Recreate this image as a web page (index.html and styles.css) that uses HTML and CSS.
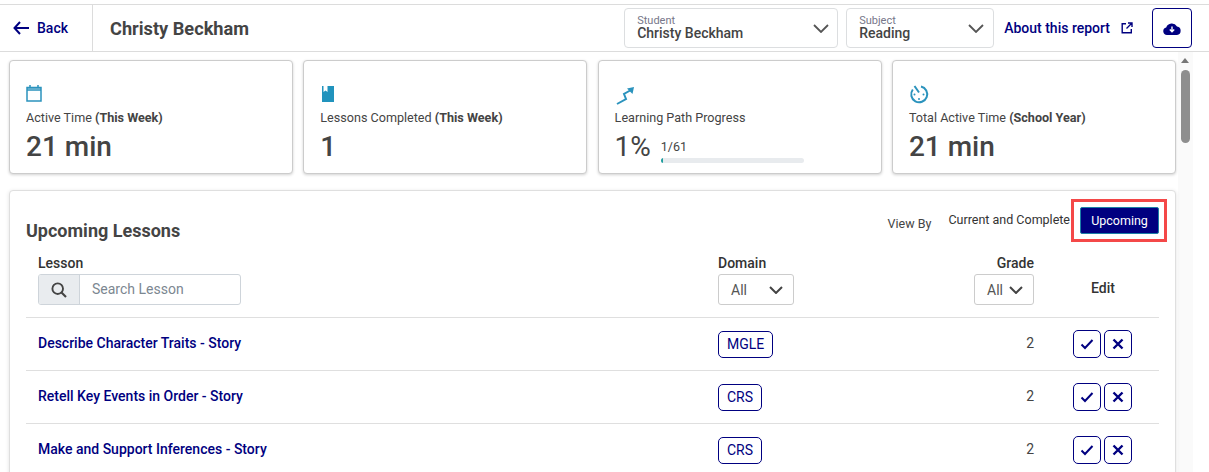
FILE: index.html
```html
<!DOCTYPE html>
<html lang="en">
<head>
<meta charset="utf-8">
<title>Christy Beckham</title>
<link rel="stylesheet" href="styles.css">
</head>
<body>
<header class="topbar">
  <a class="back">
    <svg class="back-icon" viewBox="0 0 16 14"><path d="M7 1 1.500 7 7 13M2 7h14" fill="none" stroke="#000080" stroke-width="2"/></svg>
    Back
  </a>
  <h1 class="student-name">Christy Beckham</h1>
  <div class="select select-student">
    <div class="select-text"><span class="select-label">Student</span><span class="select-value">Christy Beckham</span></div>
    <svg class="chev" viewBox="0 0 16 9"><path d="M1 1l7 7 7-7" fill="none" stroke="#555" stroke-width="1.800"/></svg>
  </div>
  <div class="select select-subject">
    <div class="select-text"><span class="select-label">Subject</span><span class="select-value">Reading</span></div>
    <svg class="chev" viewBox="0 0 16 9"><path d="M1 1l7 7 7-7" fill="none" stroke="#555" stroke-width="1.800"/></svg>
  </div>
  <a class="about">About this report
    <svg class="ext" viewBox="0 0 12 12"><path d="M5 1.700H1.200v9.100h9.100V7M7 1h4v4M11 1 5.500 6.500" fill="none" stroke="#000080" stroke-width="1.400"/></svg>
  </a>
  <button class="download"><svg viewBox="0 0 18 13" class="cloud"><path d="M4 13a3.800 3.800 0 0 1-.8-7.500A6 6 0 0 1 14 4.500 4.300 4.300 0 0 1 14 13z" fill="#000080"/><path d="M9 4.500v5M6.800 7.500 9 9.800l2.200-2.300" fill="none" stroke="#fff" stroke-width="1.400"/></svg></button>
</header>

<div class="content">
  <main class="main">
    <section class="cards">
      <article class="card">
        <svg class="card-icon" viewBox="0 0 16 18"><path d="M1 4h14v13H1zM1 3.500h14V6H1z" fill="none" stroke="#2b93bd" stroke-width="1.500"/><path d="M4 1v3M12 1v3" stroke="#2b93bd" stroke-width="1.500"/></svg>
        <p class="card-label">Active Time <b>(This Week)</b></p>
        <p class="card-value">21 min</p>
      </article>
      <article class="card">
        <svg class="card-icon" viewBox="0 0 16 18"><path d="M2 2h12v16H2z" fill="#2193bd"/><path d="M3.500 2h4v6L5.500 6.500 3.500 8z" fill="#fff"/></svg>
        <p class="card-label">Lessons Completed <b>(This Week)</b></p>
        <p class="card-value">1</p>
      </article>
      <article class="card card-path">
        <svg class="card-icon card-icon-wide" viewBox="0 0 20 18"><path d="M2 20l9-5-2-5 7-4" fill="none" stroke="#2b93bd" stroke-width="2"/><path d="M12 4.500 19 3l-1.500 7z" fill="#2b93bd"/></svg>
        <p class="card-label">Learning Path Progress</p>
        <div class="progress-row">
          <p class="card-value">1%</p>
          <div class="progress">
            <span class="progress-text">1/61</span>
            <div class="progress-track"><div class="progress-fill"></div></div>
          </div>
        </div>
      </article>
      <article class="card">
        <svg class="card-icon card-icon-wide" viewBox="0 0 20 18"><path d="M12 2.500A8 8 0 1 1 3.800 5.500" fill="none" stroke="#2b93bd" stroke-width="2"/><path d="M5.500 2l4.500 6.500" stroke="#2b93bd" stroke-width="2"/><circle cx="14.500" cy="10.500" r="1" fill="#2b93bd"/><circle cx="10" cy="15" r="1" fill="#2b93bd"/><circle cx="5.500" cy="10.500" r="1" fill="#2b93bd"/></svg>
        <p class="card-label">Total Active Time <b>(School Year)</b></p>
        <p class="card-value">21 min</p>
      </article>
    </section>

    <section class="panel">
      <div class="panel-head">
        <h2 class="panel-title">Upcoming Lessons</h2>
        <div class="view-by">
          <span class="view-label">View By</span>
          <span class="view-option">Current and Complete</span>
          <button class="view-active">Upcoming</button>
        </div>
      </div>
      <div class="grid-row grid-head">
        <div>
          <div class="col-title">Lesson</div>
          <div class="search">
            <span class="search-icon"><svg viewBox="0 0 16 16"><circle cx="6.700" cy="6.700" r="5.300" fill="none" stroke="#444" stroke-width="1.900"/><path d="M10.500 10.500 15 15" stroke="#444" stroke-width="2.100"/></svg></span>
            <span class="search-input">Search Lesson</span>
          </div>
        </div>
        <div>
          <div class="col-title">Domain</div>
          <div class="filter filter-domain">All <svg class="chev-small" viewBox="0 0 14 8"><path d="M1 1l6 6 6-6" fill="none" stroke="#444" stroke-width="2"/></svg></div>
        </div>
        <div class="col-grade">
          <div class="col-title">Grade</div>
          <div class="filter filter-grade">All <svg class="chev-small" viewBox="0 0 14 8"><path d="M1 1l6 6 6-6" fill="none" stroke="#444" stroke-width="2"/></svg></div>
        </div>
        <div class="col-edit">Edit</div>
      </div>
      <div class="grid-row lesson">
        <a class="lesson-name">Describe Character Traits - Story</a>
        <div><span class="tag">MGLE</span></div>
        <div class="grade">2</div>
        <div class="actions">
          <button class="act"><svg viewBox="0 0 14 12"><path d="M1.500 6.500 5 10l7.500-8" fill="none" stroke="#000080" stroke-width="2"/></svg></button>
          <button class="act"><svg viewBox="0 0 12 12"><path d="M1.500 1.500l9 9M10.500 1.500l-9 9" fill="none" stroke="#000080" stroke-width="2.400"/></svg></button>
        </div>
      </div>
      <div class="grid-row lesson">
        <a class="lesson-name">Retell Key Events in Order - Story</a>
        <div><span class="tag">CRS</span></div>
        <div class="grade">2</div>
        <div class="actions">
          <button class="act"><svg viewBox="0 0 14 12"><path d="M1.500 6.500 5 10l7.500-8" fill="none" stroke="#000080" stroke-width="2"/></svg></button>
          <button class="act"><svg viewBox="0 0 12 12"><path d="M1.500 1.500l9 9M10.500 1.500l-9 9" fill="none" stroke="#000080" stroke-width="2.400"/></svg></button>
        </div>
      </div>
      <div class="grid-row lesson">
        <a class="lesson-name">Make and Support Inferences - Story</a>
        <div><span class="tag">CRS</span></div>
        <div class="grade">2</div>
        <div class="actions">
          <button class="act"><svg viewBox="0 0 14 12"><path d="M1.500 6.500 5 10l7.500-8" fill="none" stroke="#000080" stroke-width="2"/></svg></button>
          <button class="act"><svg viewBox="0 0 12 12"><path d="M1.500 1.500l9 9M10.500 1.500l-9 9" fill="none" stroke="#000080" stroke-width="2.400"/></svg></button>
        </div>
      </div>
      <div class="highlight"></div>
    </section>
  </main>
  <aside class="scrollbar">
    <span class="scroll-arrow"></span>
    <span class="scroll-thumb"></span>
  </aside>
</div>
</body>
</html>
```
FILE: styles.css
```css
* { box-sizing: border-box; }
html, body { height: 100%; }
html { overflow: hidden; }
body {
  margin: 0;
  height: 472px;
  overflow: hidden;
  background: #fff;
  font-family: Roboto, "Liberation Sans", sans-serif;
  color: #444;
}
p, h1, h2 { margin: 0; }
button { font-family: inherit; padding: 0; cursor: pointer; }

.topbar {
  margin-top: 4px;
  height: 48px;
  display: flex;
  align-items: center;
  border-top: 1px solid #dcdcdc;
  border-bottom: 1px solid #dcdcdc;
}
.back {
  width: 93px;
  height: 100%;
  flex: none;
  display: flex;
  align-items: center;
  gap: 8px;
  padding-left: 13px;
  border-right: 1px solid #dcdcdc;
  color: #000080;
  font-size: 14px;
  font-weight: 500;
}
.back-icon { width: 16px; height: 14px; }
.student-name {
  margin-left: 17px;
  flex: 1;
  font-size: 18.200px;
  font-weight: 700;
  color: #444;
}
.select {
  height: 40px;
  display: flex;
  align-items: center;
  justify-content: space-between;
  border: 1px solid #dcdee0;
  border-radius: 4px;
  background: #fff;
}
.select-student { width: 214px; margin-right: 8px; padding: 0 8px 0 12px; }
.select-subject { width: 148px; margin-right: 10px; padding: 0 9px 0 12px; }
.select-text { display: flex; flex-direction: column; }
.select-label { font-size: 11px; line-height: 11px; color: #77778a; }
.select-value { font-size: 14px; line-height: 15px; font-weight: 500; color: #444; }
.chev { width: 16px; height: 9px; }
.about {
  display: flex;
  align-items: center;
  gap: 11px;
  color: #000080;
  font-size: 14px;
  font-weight: 500;
  white-space: nowrap;
}
.ext { width: 12px; height: 12px; }
.download {
  width: 40px;
  height: 40px;
  margin: 0 17px 0 19px;
  display: flex;
  align-items: center;
  justify-content: center;
  background: #fff;
  border: 1px solid #000080;
  border-radius: 4px;
}
.cloud { width: 18px; height: 13px; }

.content { display: flex; height: 420px; overflow: hidden; }
.main { width: 1178px; padding: 8px 0 0 9px; flex: none; }
.cards {
  display: grid;
  grid-template-columns: 284px 284px 284px 284px;
  column-gap: 10.300px;
}
.card {
  height: 114px;
  padding: 23px 16px 0;
  background: #fff;
  border: 1px solid #ccc;
  border-radius: 4px;
  box-shadow: 0 1px 3px rgba(0, 0, 0, .18);
}
.card-icon { display: block; width: 16px; height: 18px; overflow: visible; }
.card-icon-wide { width: 20px; }
.card-label { margin-top: 7px; font-size: 12.600px; line-height: 17px; color: #444; white-space: nowrap; }
.card-label b { font-weight: 700; }
.card-value { margin-top: 3px; font-size: 28px; line-height: 36px; font-weight: 500; color: #444; }
.progress-row { display: flex; align-items: flex-start; }
.progress-row .card-value { font-weight: 400; margin-top: 3px; }
.progress { margin: 13px 0 0 10px; }
.progress-text { display: block; font-size: 12.500px; line-height: 15px; }
.progress-track { width: 143px; height: 5px; margin-top: 4px; border-radius: 3px; background: #e8ebee; overflow: hidden; }
.progress-fill { width: 2px; height: 100%; background: #1f9e9e; }

.panel {
  position: relative;
  width: 1167px;
  height: 320px;
  margin-top: 16px;
  padding: 0 16px;
  background: #fff;
  border: 1px solid #dfdfdf;
  border-radius: 4px;
  box-shadow: 0 1px 4px rgba(0, 0, 0, .12);
}
.panel-head {
  height: 60px;
  display: flex;
  justify-content: space-between;
}
.panel-title { margin-top: 29px; font-size: 18px; line-height: 22px; font-weight: 700; color: #444; }
.view-by { display: flex; align-items: flex-start; padding-top: 16px; }
.view-label { margin: 9px 17px 0 0; font-size: 12.500px; line-height: 15px; color: #444; }
.view-option { margin-top: 5px; font-size: 12.500px; line-height: 15px; color: #333; white-space: nowrap; }
.view-active {
  width: 79px;
  height: 27px;
  margin-left: 10px;
  background: #000080;
  color: #fff;
  font-size: 12.500px;
  border: 1px solid #1b7fa6;
  border-radius: 2px;
}
.grid-row {
  display: grid;
  grid-template-columns: 680px 256px 60px 1fr;
  padding-left: 12px;
  border-bottom: 1px solid #dfdfdf;
}
.grid-head { height: 67px; align-items: start; padding-top: 4px; }
.col-title { font-size: 14px; line-height: 16px; font-weight: 500; color: #333; }
.search {
  margin-top: 3px;
  width: 203px;
  height: 31px;
  display: flex;
  border: 1px solid #ced4da;
  border-radius: 3px;
  overflow: hidden;
}
.search-icon {
  width: 41px;
  display: flex;
  align-items: center;
  justify-content: center;
  background: #e9ecef;
  border-right: 1px solid #ced4da;
}
.search-icon svg { width: 16px; height: 16px; }
.search-input { padding-left: 12px; font-size: 14px; line-height: 29px; color: #7c8791; }
.filter {
  margin-top: 3px;
  height: 31px;
  display: flex;
  align-items: center;
  justify-content: space-between;
  border: 1px solid #ccc;
  border-radius: 3px;
  font-size: 14px;
  color: #555;
}
.filter-domain { width: 76px; padding: 0 10px 0 12px; }
.filter-grade { width: 60px; padding: 0 10px 0 12px; }
.chev-small { width: 14px; height: 8px; }
.col-grade { text-align: right; }
.col-edit { padding-top: 25px; padding-left: 57px; font-size: 14px; line-height: 16px; font-weight: 500; color: #333; }
.lesson { height: 53px; align-items: center; }
.lesson-name { padding-bottom: 2px; font-size: 14px; font-weight: 500; color: #000080; white-space: nowrap; }
.tag {
  display: inline-block;
  height: 27px;
  padding: 0 8px;
  line-height: 24px;
  font-size: 14px;
  color: #000080;
  border: 1px solid #000080;
  border-radius: 5px;
}
.grade { padding-bottom: 2px; text-align: right; font-size: 14px; color: #444; }
.actions { display: flex; gap: 3px; padding-left: 39px; }
.act {
  width: 28px;
  height: 28px;
  display: flex;
  align-items: center;
  justify-content: center;
  background: #fff;
  border: 1px solid #000080;
  border-radius: 5px;
}
.act svg { width: 14px; height: 12px; }
.highlight {
  position: absolute;
  left: 1061px;
  top: 8px;
  width: 96px;
  height: 43px;
  border: 3px solid #f44848;
}

.scrollbar {
  width: 15px;
  flex: none;
  display: flex;
  flex-direction: column;
  align-items: flex-start;
  padding: 6px 0 0 3px;
  background: #fafafa;
}
.scroll-arrow {
  border-left: 4.500px solid transparent;
  border-right: 4.500px solid transparent;
  border-bottom: 5px solid #777;
}
.scroll-thumb {
  width: 9px;
  height: 73px;
  margin-top: 7px;
  background: #8e8e8e;
  border-radius: 5px;
}
```
